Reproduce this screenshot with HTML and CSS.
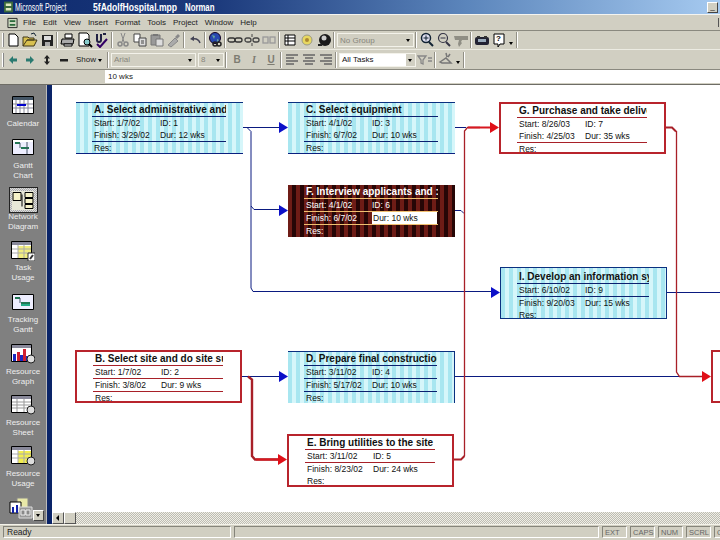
FILE: index.html
```html
<!DOCTYPE html>
<html lang="en">
<head>
<meta charset="utf-8">
<title>Microsoft Project</title>
<link rel="stylesheet" href="styles.css">
</head>
<body>
<svg class="defs" width="0" height="0">
  <symbol id="i-new" viewBox="0 0 16 16"><path d="M4 2h6l3 3v9H4z" fill="#fff" stroke="#000"/></symbol>
  <symbol id="i-open" viewBox="0 0 16 16"><path d="M1 14V5h5l1 1h5v2H5l-4 6h11l3-6H5" fill="#d8c050" stroke="#40381a"/><path d="M9 2l3-1 2 3" fill="none" stroke="#123"/></symbol>
  <symbol id="i-save" viewBox="0 0 16 16"><path d="M3 3h11v11H3z" fill="#222"/><path d="M5 4h7v4H5z" fill="#ddd"/><path d="M6 10h5v4H6z" fill="#aaa"/></symbol>
  <symbol id="i-print" viewBox="0 0 16 16"><path d="M5 2h7v4H5z" fill="#fff" stroke="#000"/><path d="M2 7h12l-1 5H1z" fill="#aaa" stroke="#000"/><path d="M4 12h8v2H4z" fill="#fff" stroke="#000"/></symbol>
  <symbol id="i-prev" viewBox="0 0 16 16"><path d="M2 1h8l2 2v11H2z" fill="#fff" stroke="#000"/><circle cx="10" cy="10" r="3" fill="#8cc" stroke="#000"/><path d="M12 12l3 3" stroke="#000" stroke-width="2"/></symbol>
  <symbol id="i-spell" viewBox="0 0 16 16"><path d="M3 2v6q0 2 2 2t2-2V2M9 2h3" fill="none" stroke="#224" stroke-width="2"/><path d="M3 12l3 3 7-8" fill="none" stroke="#306" stroke-width="2"/></symbol>
  <symbol id="i-cut" viewBox="0 0 16 16"><path d="M6 1l3 9M10 1L7 10" stroke="#888" fill="none"/><circle cx="5" cy="12" r="2" fill="none" stroke="#888" stroke-width="1.5"/><circle cx="11" cy="12" r="2" fill="none" stroke="#888" stroke-width="1.5"/></symbol>
  <symbol id="i-copy" viewBox="0 0 16 16"><path d="M2 2h6v8H2z" fill="#fff" stroke="#444"/><path d="M7 6h7v8H7z" fill="#ddd" stroke="#444"/><path d="M9 9h3M9 11h3" stroke="#444"/></symbol>
  <symbol id="i-paste" viewBox="0 0 16 16"><path d="M2 3h9v10H2z" fill="#999" stroke="#777"/><path d="M7 7h7v7H7z" fill="#ddd" stroke="#777"/><path d="M4 2h5v2H4z" fill="#777"/></symbol>
  <symbol id="i-paint" viewBox="0 0 16 16"><path d="M2 13l7-7 3 3-7 6z" fill="#aaa" stroke="#888"/><path d="M9 5l3-3 2 2-3 3z" fill="#888"/></symbol>
  <symbol id="i-undo" viewBox="0 0 16 16"><path d="M13 11Q11 6 6 7" fill="none" stroke="#445" stroke-width="1.5"/><path d="M3 7l4-3v5z" fill="#445"/></symbol>
  <symbol id="i-globe" viewBox="0 0 16 16"><circle cx="7" cy="6" r="5.5" fill="#2848b0" stroke="#102"/><path d="M4 3l3 1-1 3zM9 7l2 1-2 2z" fill="#6a9"/><path d="M5 12a2 2 0 1 1 4 0a2 2 0 1 1-4 0M9 12a2 2 0 1 1 4 0a2 2 0 1 1-4 0" fill="none" stroke="#222" stroke-width="1.5"/></symbol>
  <symbol id="i-link" viewBox="0 0 16 16"><rect x="1" y="6" width="7" height="4" rx="2" fill="none" stroke="#333" stroke-width="1.3"/><rect x="8" y="6" width="7" height="4" rx="2" fill="none" stroke="#333" stroke-width="1.3"/></symbol>
  <symbol id="i-unlink" viewBox="0 0 16 16"><rect x="1" y="6" width="6" height="4" rx="2" fill="none" stroke="#444" stroke-width="1.3"/><rect x="9" y="6" width="6" height="4" rx="2" fill="none" stroke="#444" stroke-width="1.3"/><path d="M8 2v3M8 11v3" stroke="#444"/></symbol>
  <symbol id="i-split" viewBox="0 0 16 16"><rect x="2" y="5" width="5" height="6" fill="none" stroke="#999" stroke-width="1.3"/><rect x="9" y="5" width="5" height="6" fill="none" stroke="#999" stroke-width="1.3"/></symbol>
  <symbol id="i-list" viewBox="0 0 16 16"><path d="M3 3h10v10H3z" fill="#fff" stroke="#000"/><path d="M3 6h10M3 9h10M6 3v10" stroke="#000"/></symbol>
  <symbol id="i-note" viewBox="0 0 16 16"><circle cx="8" cy="8" r="5" fill="#e8d860" stroke="#998"/><circle cx="8" cy="8" r="2" fill="#a83"/></symbol>
  <symbol id="i-assign" viewBox="0 0 16 16"><circle cx="9" cy="8" r="6" fill="#1a1a1a"/><circle cx="8" cy="6" r="2.5" fill="#ccc"/><path d="M2 12h4v2H2z" fill="#222"/></symbol>
  <symbol id="i-zin" viewBox="0 0 16 16"><circle cx="7" cy="6" r="4.500" fill="#dde" stroke="#123" stroke-width="1.500"/><path d="M4.500 6h5M7 3.500v5" stroke="#123"/><path d="M10 10l4 4" stroke="#123" stroke-width="2"/></symbol>
  <symbol id="i-zout" viewBox="0 0 16 16"><circle cx="7" cy="6" r="4.500" fill="none" stroke="#334" stroke-width="1.200"/><path d="M4.500 6h5" stroke="#334"/><path d="M10 10l4 4" stroke="#334" stroke-width="2"/></symbol>
  <symbol id="i-goto" viewBox="0 0 16 16"><path d="M1 4h14v4H9l-1 2 1 1-3 4-1-3 1-4H4L2 8z" fill="#8f8e84"/></symbol>
  <symbol id="i-cam" viewBox="0 0 16 16"><rect x="1" y="5" width="14" height="8" rx="2" fill="#223"/><path d="M3 4h3v2H3zM10 4h3v2h-3z" fill="#333"/><rect x="4" y="7" width="8" height="3" fill="#9ab"/></symbol>
  <symbol id="i-help" viewBox="0 0 16 16"><path d="M3 2h10v10H9l-2 3v-3H3z" fill="#fff" stroke="#000"/></symbol>
  <symbol id="i-left" viewBox="0 0 16 16"><path d="M4 8l4-4v2.5h4v3H8V12z" fill="#2a7a70"/></symbol>
  <symbol id="i-right" viewBox="0 0 16 16"><path d="M12 8L8 4v2.5H4v3h4V12z" fill="#2a7a70"/></symbol>
  <symbol id="i-plus" viewBox="0 0 16 16"><path d="M8 3l3 3.5H9v3h2L8 13 5 9.5h2v-3H5z" fill="#222"/></symbol>
  <symbol id="i-minus" viewBox="0 0 16 16"><path d="M4 7h8v2.5H4z" fill="#222"/></symbol>
  <symbol id="i-left3" viewBox="0 0 16 16"><path d="M2 3h12M2 6h8M2 9h12M2 12h8" stroke="#666" stroke-width="1.3"/></symbol>
  <symbol id="i-center" viewBox="0 0 16 16"><path d="M2 3h12M4 6h8M2 9h12M4 12h8" stroke="#666" stroke-width="1.3"/></symbol>
  <symbol id="i-right3" viewBox="0 0 16 16"><path d="M2 3h12M6 6h8M2 9h12M6 12h8" stroke="#666" stroke-width="1.3"/></symbol>
  <symbol id="i-filter" viewBox="0 0 16 16"><path d="M1 4h8L6 8v4L4 11V8zM11 6h4M11 9h4" fill="none" stroke="#888" stroke-width="1.3"/></symbol>
  <symbol id="i-auto" viewBox="0 0 16 16"><path d="M2 10l6-4 5 5H4zM8 1l1 4M12 2l-2 3" fill="none" stroke="#777" stroke-width="1.5"/></symbol>

  <symbol id="v-cal" viewBox="0 0 22 18"><path d="M.5.5h21v17H.5z" fill="#fff" stroke="#000"/><path d="M1 1h20v3H1z" fill="#456"/><path d="M4 4v13M8 4v13M12 4v13M16 4v13M1 8h20M1 12h20" stroke="#889"/><path d="M5 9h9" stroke="#00c" stroke-width="2"/></symbol>
  <symbol id="v-gantt" viewBox="0 0 22 16"><path d="M.5.5h21v15H.5z" fill="#eef" stroke="#000"/><path d="M1 1h20v2H1z" fill="#fff"/><path d="M3 4h5M9 9h8" stroke="#275" stroke-width="2"/><path d="M8 4v5M15 3v12" stroke="#456"/></symbol>
  <symbol id="v-net" viewBox="0 0 22 18"><path d="M1 1h8v8H1zM13 1h8v5h-8zM13 7h8v5h-8zM13 13h8v4h-8z" fill="#f6f2c8" stroke="#000"/><path d="M10 3v12" stroke="#000"/></symbol>
  <symbol id="v-task" viewBox="0 0 24 20"><path d="M.5.5h20v17H.5z" fill="#fff" stroke="#000"/><path d="M1 1h19v3H1z" fill="#889"/><path d="M7 5h13v12H7z" fill="#f2ee80"/><path d="M7 4v13M1 8h19M1 12h19M13 4v13" stroke="#aaa"/><path d="M17 12h7v8h-7z" fill="#fff" stroke="#333"/><path d="M19 18l3-4" stroke="#333" stroke-width="2"/></symbol>
  <symbol id="v-track" viewBox="0 0 22 16"><path d="M.5.5h21v15H.5z" fill="#eef" stroke="#000"/><path d="M3 4h5M9 9h9" stroke="#275" stroke-width="2"/><path d="M9 11h9" stroke="#2a8" stroke-width="2"/><path d="M8 4v5" stroke="#456"/></symbol>
  <symbol id="v-graph" viewBox="0 0 24 20"><path d="M.5.5h20v17H.5z" fill="#fff" stroke="#000"/><path d="M1 1h19v3H1z" fill="#889"/><path d="M2 10h3v7H2zM9 11h3v6H9zM15 12h3v5h-3z" fill="#1a2ac0"/><path d="M6 8h3v9H6zM12 5h3v12h-3z" fill="#d02030"/><circle cx="20" cy="15" r="4" fill="#ddd" stroke="#222"/></symbol>
  <symbol id="v-sheet" viewBox="0 0 24 20"><path d="M.5.5h20v17H.5z" fill="#fff" stroke="#000"/><path d="M1 1h19v3H1z" fill="#889"/><path d="M6 4v13M13 4v13M1 7h19M1 10h19M1 13h19" stroke="#999"/><circle cx="20" cy="15" r="4" fill="#ddd" stroke="#222"/></symbol>
  <symbol id="v-usage" viewBox="0 0 24 20"><path d="M.5.5h20v17H.5z" fill="#fff" stroke="#000"/><path d="M1 1h19v3H1z" fill="#889"/><path d="M7 5h13v12H7z" fill="#f2ee50"/><path d="M7 4v13M1 8h19M1 12h19M13 4v13" stroke="#aaa"/><circle cx="20" cy="15" r="4" fill="#ddd" stroke="#222"/></symbol>
  <symbol id="v-more" viewBox="0 0 24 24"><path d="M8 1h11v14H8z" fill="#e8e8a8" stroke="#888"/><path d="M1 5h11v11H1z" fill="#fff" stroke="#000"/><path d="M3 10h2v6H3zM7 8h2v8H7z" fill="#12a"/><path d="M10 10h13v11H10z" fill="#999" stroke="#ddd"/><path d="M12 13h4v5h-4zM17 13h4v5h-4z" fill="#888" stroke="#eee"/></symbol>
</svg>

<div class="app">
  <header class="title">
    <svg class="title-icon" viewBox="0 0 10 12"><path d="M0 0h10v12H0z" fill="#3c6a3c"/><path d="M2 2h6v3H2zM2 7h6v3H2z" fill="#dfe8c0"/></svg>
    <span class="title-app">Microsoft Project</span>
    <span class="title-file">5fAdolfHospital.mpp</span>
    <span class="title-view">Norman</span>
    <span class="win-btn">_</span>
  </header>

  <nav class="menu">
    <svg class="menu-icon" viewBox="0 0 12 12"><path d="M1 1h10v10H1z" fill="#cdd8c0" stroke="#222"/><path d="M3 3h6v2H3zM3 7h6v2H3z" fill="#2a6a3a"/></svg>
    <span>File</span><span>Edit</span><span>View</span><span>Insert</span><span>Format</span><span>Tools</span><span>Project</span><span>Window</span><span>Help</span>
    <i class="menu-end"></i>
  </nav>

  <div class="toolbar">
    <i class="grip"></i>
    <svg class="ic"><use href="#i-new"/></svg><svg class="ic"><use href="#i-open"/></svg><svg class="ic"><use href="#i-save"/></svg>
    <i class="sep"></i>
    <svg class="ic"><use href="#i-print"/></svg><svg class="ic"><use href="#i-prev"/></svg><svg class="ic"><use href="#i-spell"/></svg>
    <i class="sep"></i>
    <svg class="ic"><use href="#i-cut"/></svg><svg class="ic"><use href="#i-copy"/></svg><svg class="ic"><use href="#i-paste"/></svg><svg class="ic"><use href="#i-paint"/></svg>
    <i class="sep"></i>
    <svg class="ic"><use href="#i-undo"/></svg>
    <i class="sep"></i>
    <svg class="ic"><use href="#i-globe"/></svg>
    <i class="sep tight"></i>
    <svg class="ic"><use href="#i-link"/></svg><svg class="ic"><use href="#i-unlink"/></svg><svg class="ic"><use href="#i-split"/></svg>
    <i class="sep"></i>
    <svg class="ic"><use href="#i-list"/></svg><svg class="ic"><use href="#i-note"/></svg><svg class="ic"><use href="#i-assign"/></svg>
    <i class="sep"></i>
    <span class="combo combo-group off">No Group<b class="drop"></b></span>
    <i class="sep"></i>
    <svg class="ic"><use href="#i-zin"/></svg><svg class="ic"><use href="#i-zout"/></svg><svg class="ic"><use href="#i-goto"/></svg>
    <i class="sep"></i>
    <svg class="ic"><use href="#i-cam"/></svg><span class="ic-text"><svg class="ic"><use href="#i-help"/></svg><span class="q">?</span></span>
    <b class="caret"></b>
    <i class="sep end"></i>
  </div>

  <div class="toolbar">
    <i class="grip"></i>
    <svg class="ic"><use href="#i-left"/></svg><svg class="ic"><use href="#i-right"/></svg><svg class="ic"><use href="#i-plus"/></svg><svg class="ic"><use href="#i-minus"/></svg>
    <span class="show">Show<b class="caret"></b></span>
    <i class="sep"></i>
    <span class="combo combo-font off">Arial<b class="drop"></b></span>
    <span class="combo combo-size off">8<b class="drop"></b></span>
    <i class="sep"></i>
    <span class="fmt">B</span><span class="fmt fmt-i">I</span><span class="fmt fmt-u">U</span>
    <i class="sep"></i>
    <svg class="ic"><use href="#i-left3"/></svg><svg class="ic"><use href="#i-center"/></svg><svg class="ic"><use href="#i-right3"/></svg>
    <i class="sep"></i>
    <span class="combo combo-group on">All Tasks<b class="drop"></b></span>
    <svg class="ic"><use href="#i-filter"/></svg>
    <i class="sep"></i>
    <svg class="ic"><use href="#i-auto"/></svg>
    <b class="caret"></b>
    <i class="sep end"></i>
  </div>

  <div class="entry"><div class="entry-field">10 wks</div></div>

  <div class="main">
    <aside class="views">
      <div class="view view-one"><svg class="v-ic v-cal"><use href="#v-cal"/></svg><span>Calendar</span></div>
      <div class="view"><svg class="v-ic v-short"><use href="#v-gantt"/></svg><span>Gantt<br>Chart</span></div>
      <div class="view active"><span class="v-frame"><svg class="v-ic"><use href="#v-net"/></svg></span><span>Network<br>Diagram</span></div>
      <div class="view view-task"><svg class="v-ic"><use href="#v-task"/></svg><span>Task<br>Usage</span></div>
      <div class="view view-track"><svg class="v-ic v-short"><use href="#v-track"/></svg><span>Tracking<br>Gantt</span></div>
      <div class="view"><svg class="v-ic"><use href="#v-graph"/></svg><span>Resource<br>Graph</span></div>
      <div class="view"><svg class="v-ic"><use href="#v-sheet"/></svg><span>Resource<br>Sheet</span></div>
      <div class="view"><svg class="v-ic"><use href="#v-usage"/></svg><span>Resource<br>Usage</span></div>
      <div class="view view-more"><svg class="v-more"><use href="#v-more"/></svg><b class="more-btn"></b></div>
    </aside>
    <div class="strip"></div>
    <div class="work">
      <div class="canvas">
        <svg class="links" viewBox="52 85 668 427">
          <g fill="none" stroke="#0a1a80" stroke-width="1">
            <path d="M242 127.5H281"/>
            <path d="M247 127.5l4 4V288l2 3.5H492"/>
            <path d="M251 206l3 3.5H281"/>
            <path d="M454 127.5H466"/>
            <path d="M454 210.5h7l3 3"/>
            <path d="M665 292.5H720"/>
            <path d="M242 376.5H281"/>
            <path d="M454 376.5H680"/>
          </g>
          <g fill="#0c10c8">
            <path d="M279 122l9 5.5-9 5.5zM279 205l9 5.5-9 5.5zM491 287l9 5.5-9 5.5zM279 371l9 5.5-9 5.5z"/>
          </g>
          <g fill="none" stroke="#a82028">
            <path d="M464.5 456V131l3-3.5H480" stroke-width="1.3"/>
            <path d="M454 459.5h7l3.5-3.500" stroke-width="2"/>
            <path d="M665 127.500h7l4 4" stroke-width="2"/>
            <path d="M676.500 131V372l3 4.500H704" stroke-width="1.3"/>
            <path d="M248 376.5l4 3V456l3 3.500H280" stroke-width="2.400"/>
          </g>
          <path d="M468 127.500H492M256 459.500H280" fill="none" stroke="#d81820" stroke-width="2"/>
          <path d="M490 122l9 5.500-9 5.500zM702 371l9 5.500-9 5.500zM278 454l9 5.500-9 5.500z" fill="#e01018"/>
        </svg>

        <article class="node blue pos-a">
          <h3>A. Select administrative and</h3>
          <div class="row rule-top"><span>Start: 1/7/02</span><span>ID: 1</span></div>
          <div class="row"><span>Finish: 3/29/02</span><span>Dur: 12 wks</span></div>
          <div class="row rule-top">Res:</div>
        </article>
        <article class="node blue pos-c">
          <h3>C. Select equipment</h3>
          <div class="row rule-top"><span>Start: 4/1/02</span><span>ID: 3</span></div>
          <div class="row"><span>Finish: 6/7/02</span><span>Dur: 10 wks</span></div>
          <div class="row rule-top">Res:</div>
        </article>
        <article class="node red pos-g">
          <h3>G. Purchase and take delive</h3>
          <div class="row rule-top"><span>Start: 8/26/03</span><span>ID: 7</span></div>
          <div class="row"><span>Finish: 4/25/03</span><span>Dur: 35 wks</span></div>
          <div class="row rule-top">Res:</div>
        </article>
        <article class="node dark pos-f">
          <h3>F. Interview applicants and :</h3>
          <div class="row rule-top"><span>Start: 4/1/02</span><span>ID: 6</span></div>
          <div class="row rule-top"><span>Finish: 6/7/02</span><span class="selected">Dur: 10 wks</span></div>
          <div class="row rule-top">Res:</div>
        </article>
        <article class="node blue boxed pos-i">
          <h3>I. Develop an information sy</h3>
          <div class="row rule-top"><span>Start: 6/10/02</span><span>ID: 9</span></div>
          <div class="row rule-top"><span>Finish: 9/20/03</span><span>Dur: 15 wks</span></div>
          <div class="row">Res:</div>
        </article>
        <article class="node red pos-b">
          <h3>B. Select site and do site sur</h3>
          <div class="row rule-top"><span>Start: 1/7/02</span><span>ID: 2</span></div>
          <div class="row rule-top"><span>Finish: 3/8/02</span><span>Dur: 9 wks</span></div>
          <div class="row rule-top">Res:</div>
        </article>
        <article class="node blue pos-d">
          <h3>D. Prepare final construction</h3>
          <div class="row rule-top"><span>Start: 3/11/02</span><span>ID: 4</span></div>
          <div class="row rule-top"><span>Finish: 5/17/02</span><span>Dur: 10 wks</span></div>
          <div class="row rule-top">Res:</div>
        </article>
        <article class="node red pos-e">
          <h3>E. Bring utilities to the site</h3>
          <div class="row rule-top"><span>Start: 3/11/02</span><span>ID: 5</span></div>
          <div class="row rule-top"><span>Finish: 8/23/02</span><span>Dur: 24 wks</span></div>
          <div class="row">Res:</div>
        </article>
        <article class="node red pos-h"></article>
      </div>
      <div class="hscroll">
        <span class="sb-btn"><b class="sb-arrow"></b></span><span class="sb-thumb"></span><span class="sb-track"></span>
      </div>
    </div>
  </div>

  <footer class="status">
    <span class="panel panel-ready">Ready</span>
    <span class="panel panel-fill"></span>
    <span class="panel panel-key">EXT</span>
    <span class="panel panel-key">CAPS</span>
    <span class="panel panel-key">NUM</span>
    <span class="panel panel-key">SCRL</span>
    <span class="panel panel-key">OVR</span>
  </footer>
</div>
</body>
</html>
```

FILE: styles.css
```css
* { box-sizing: border-box; }
html, body { margin: 0; padding: 0; width: 720px; height: 540px; overflow: hidden; }
body { font-family: "Liberation Sans", Arial, sans-serif; font-size: 9px; color: #111; background: #d1cfc2; }
.defs { display: block; position: absolute; }
.app { width: 720px; height: 540px; display: flex; flex-direction: column; overflow: hidden; }

.title { height: 15px; flex: none; display: flex; align-items: center; padding-left: 4px; color: #fff; border-bottom: 1px solid #f4f4f0; white-space: nowrap;
  background: linear-gradient(90deg, #0e2a6e 0%, #1c3a7c 30%, #5c86bc 65%, #a6caf0 100%); }
.title-icon { width: 9px; height: 12px; flex: none; margin-right: 2px; }
.title-app { font-size: 10px; width: 54px; flex: none; transform: scaleX(.69); transform-origin: left; }
.title-file { font-size: 10px; font-weight: bold; margin-left: 24px; width: 92px; flex: none; transform: scaleX(.86); transform-origin: left; }
.title-view { font-size: 10px; font-weight: bold; flex: 1; transform: scaleX(.78); transform-origin: left; }
.win-btn { width: 11px; height: 11px; margin-right: 2px; background: #d1cfc2; color: #000; font-size: 8px; line-height: 8px; text-align: center; border: 1px solid; border-color: #fff #444 #444 #fff; }

.menu { height: 16px; flex: none; display: flex; align-items: center; padding-left: 7px; gap: 7px; font-size: 8px; color: #222; border-bottom: 1px solid #8a897f; }
.menu-icon { width: 11px; height: 12px; flex: none; margin-right: -2px; }
.menu-end { margin-left: auto; width: 2px; height: 9px; border-left: 1px solid #555; }

.toolbar { height: 19px; flex: none; display: flex; align-items: center; padding-left: 2px; gap: 1px; border-bottom: 1px solid #ecebe2; }
.toolbar + .toolbar { border-bottom: 1px solid #8a897f; height: 20px; }
.grip { width: 2px; height: 14px; border-left: 1px solid #fff; border-right: 1px solid #888; flex: none; }
.sep { width: 2px; height: 16px; margin-right: 1px; border-left: 1px solid #918f85; border-right: 1px solid #fff; flex: none; }
.sep.tight { margin-right: 0; margin-left: -1px; }
.sep.end { margin-left: 2px; }
.ic { width: 16px; height: 16px; flex: none; }
.ic-text { position: relative; width: 16px; height: 16px; flex: none; }
.q { position: absolute; left: 5px; top: 2px; font-weight: bold; font-size: 8px; color: #000; }
.caret { width: 0; height: 0; margin: 6px 0 0 1px; border: 2.500px solid transparent; border-top: 3px solid #000; border-bottom: 0; flex: none; }

.combo { height: 14px; display: flex; align-items: center; justify-content: space-between; padding-left: 2px; font-size: 8px; border: 1px solid #f3f2ea; flex: none; white-space: nowrap; }
.combo.off { color: #87867c; background: #d1cfc2; }
.combo.on { color: #111; background: #fff; }
.combo-group { width: 77px; }
.combo-font { width: 85px; }
.combo-size { width: 26px; margin-left: 1px; }
.drop { width: 9px; height: 12px; background: #d1cfc2; position: relative; flex: none; }
.drop::after { content: ""; position: absolute; left: 2px; top: 5px; border: 2.500px solid transparent; border-top: 3px solid #000; border-bottom: 0; }
.show { width: 28px; margin: 0 2px 0 3px; display: flex; align-items: center; font-size: 8px; color: #222; flex: none; }
.show .caret { margin: 1px 0 0 2px; }
.fmt { width: 16px; text-align: center; font-size: 10px; font-weight: bold; color: #7d7c72; flex: none; }
.fmt-i { font-style: italic; font-family: "Liberation Serif", serif; }
.fmt-u { text-decoration: underline; }

.entry { height: 15px; flex: none; padding-left: 105px; border-bottom: 1px solid #6e6d66; }
.entry-field { height: 13px; background: #fff; font-size: 8px; line-height: 13px; padding-left: 3px; color: #222; }

.main { flex: 1; display: flex; min-height: 0; }
.views { width: 47px; flex: none; background: #808080; color: #eee; display: flex; flex-direction: column; align-items: center; padding-top: 10px; border-right: 1px solid #bbb; font-size: 8px; line-height: 10px; text-align: center; }
.view { height: 51px; width: 100%; display: flex; flex-direction: column; align-items: center; flex: none; gap: 3px; }
.view .v-ic { width: 24px; height: 20px; margin-top: 1px; flex: none; }
.view-one { height: 43px; gap: 5px; }
.view .v-cal { width: 22px; height: 18px; }
.view .v-short { width: 22px; height: 16px; margin-bottom: 3px; }
.view.active { margin-top: -2px; height: 54px; gap: 0; }
.view-task { gap: 2px; }
.view-task .v-ic { margin-top: 0; }
.view-track .v-short { margin-top: 2px; margin-bottom: 2px; }
.v-frame { width: 29px; height: 26px; display: flex; align-items: center; justify-content: center; border: 1px solid #222; background: repeating-conic-gradient(#aaa 0 25%, #ddd 0 50%) 0 0 / 2px 2px; margin-bottom: -1px; flex: none; }
.v-frame .v-ic { width: 22px; height: 19px; margin-top: 0; background: #e8e8d8; }
.view-more { height: 28px; position: relative; }
.v-more { width: 24px; height: 24px; position: absolute; left: 9px; top: 1px; }
.more-btn { position: absolute; left: 33px; top: 14px; width: 11px; height: 11px; background: #d1cfc2; border: 1px solid; border-color: #fff #444 #444 #fff; }
.more-btn::after { content: ""; position: absolute; left: 2px; top: 3px; border: 2.500px solid transparent; border-top: 3px solid #000; border-bottom: 0; }
.strip { width: 5px; flex: none; background: #0a2468; }
.work { flex: 1; display: flex; flex-direction: column; min-width: 0; }
.canvas { flex: 1; position: relative; background: #fff; overflow: hidden; }
.links { position: absolute; left: 0; top: 0; width: 668px; height: 427px; }

.hscroll { height: 12px; flex: none; display: flex; }
.sb-btn { width: 12px; background: #d1cfc2; border: 1px solid; border-color: #fff #555 #555 #fff; position: relative; }
.sb-arrow { position: absolute; left: 3px; top: 2px; border: 3px solid transparent; border-right: 3px solid #000; border-left: 0; }
.sb-thumb { width: 12px; background: #d1cfc2; border: 1px solid; border-color: #fff #555 #555 #fff; }
.sb-track { flex: 1; background: repeating-conic-gradient(#bdbcb2 0 25%, #efeee6 0 50%) 0 0 / 2px 2px; }

.status { height: 16px; flex: none; display: flex; padding: 1px 0 0 3px; gap: 3px; font-size: 8.500px; border-top: 1px solid #f4f3ea; }
.panel { height: 12px; border-left: 1px solid #85847a; border-top: 1px solid #85847a; border-right: 1px solid #fff; border-bottom: 1px solid #fff; line-height: 11px; color: #666; flex: none; padding-left: 3px; }
.panel-ready { width: 228px; color: #222; }
.panel-fill { width: 365px; }
.panel-key { width: 25px; font-size: 7.500px; padding-left: 2px; white-space: nowrap; overflow: hidden; }

.node { position: absolute; width: 167px; height: 52px; padding: 0 17px 0 16px; overflow: hidden; }
.node h3 { margin: 0; height: 13px; font-size: 10px; line-height: 13px; padding-left: 2px; font-weight: bold; white-space: nowrap; overflow: hidden; }
.row { height: 12px; display: grid; grid-template-columns: 66px 1fr; font-size: 8.500px; line-height: 12px; padding-left: 2px; white-space: nowrap; }
.rule-top { height: 13px; border-top: 1px solid; }

.blue { border-top: 1px solid #0a3080; border-bottom: 1px solid #0a2080;
  background: linear-gradient(90deg, #a8e6f0 50%, #d6f6fa 50%) 0 0 / 8px 100%; }
.blue h3, .blue .row { color: #111; }
.blue .rule-top { border-top-color: #0a2070; }
.boxed { border: 1px solid #0a3080; }

.red { background: #fff; border: 2px solid #b8242c; }
.red h3, .red .row { color: #111; }
.red .rule-top { border-top-color: #a82028; }

.dark { background: linear-gradient(90deg, #6e1c16 50%, #260606 50%) 0 0 / 8px 100%; }
.dark h3, .dark .row { color: #fff; }
.dark .rule-top { border-top-color: #f0c070; }
.dark .selected { background: #fff; color: #111; margin-right: 1px; padding-left: 1px; }

.pos-a { left: 24px; top: 17px; }
.pos-c { left: 236px; top: 17px; }
.pos-g { left: 447px; top: 17px; }
.pos-f { left: 236px; top: 100px; }
.pos-i { left: 448px; top: 182px; padding-top: 2px; }
.pos-b { left: 23px; top: 265px; height: 53px; }
.pos-d { left: 236px; top: 266px; border-bottom: 0; border-right: 1px solid #0a3080; }
.pos-e { left: 235px; top: 349px; height: 53px; }
.pos-h { left: 659px; top: 265px; height: 53px; }
```
